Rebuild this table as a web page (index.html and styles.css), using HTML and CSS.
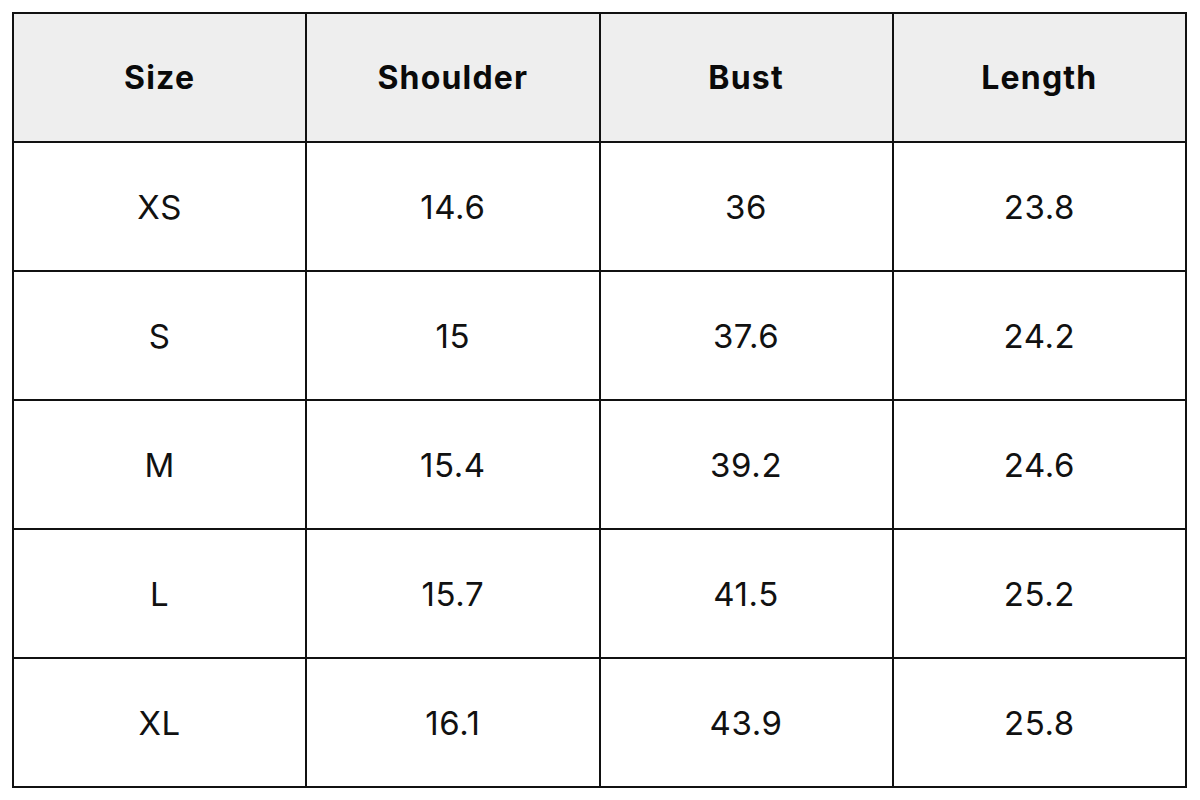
FILE: index.html
```html
<!DOCTYPE html>
<html>
<head>
<meta charset="utf-8">
<link rel="stylesheet" href="styles.css">
</head>
<body>
<table class="size-table">
  <thead>
    <tr><th>Size</th><th>Shoulder</th><th>Bust</th><th>Length</th></tr>
  </thead>
  <tbody>
    <tr><td>XS</td><td>14.6</td><td>36</td><td>23.8</td></tr>
    <tr><td>S</td><td>15</td><td>37.6</td><td>24.2</td></tr>
    <tr><td>M</td><td>15.4</td><td>39.2</td><td>24.6</td></tr>
    <tr><td>L</td><td>15.7</td><td>41.5</td><td>25.2</td></tr>
    <tr><td>XL</td><td>16.1</td><td>43.9</td><td>25.8</td></tr>
  </tbody>
</table>
</body>
</html>
```
FILE: styles.css
```css
html, body {
  margin: 0;
  padding: 0;
  background: #ffffff;
}
body {
  padding: 12px 0 0 12px;
  font-family: "Inter", "Open Sans", sans-serif;
  color: #111;
}
.size-table {
  border-collapse: collapse;
  width: 1175px;
  table-layout: fixed;
}
.size-table th,
.size-table td {
  border: 2px solid #111;
  height: 127px;
  padding: 0;
  text-align: center;
  vertical-align: middle;
  font-size: 33px;
}
.size-table th {
  background: #eeeeee;
  font-weight: 700;
  font-size: 32px;
  letter-spacing: 1.2px;
  color: #0a0a0a;
}
.size-table td {
  font-weight: 400;
  letter-spacing: 0.6px;
}
```
